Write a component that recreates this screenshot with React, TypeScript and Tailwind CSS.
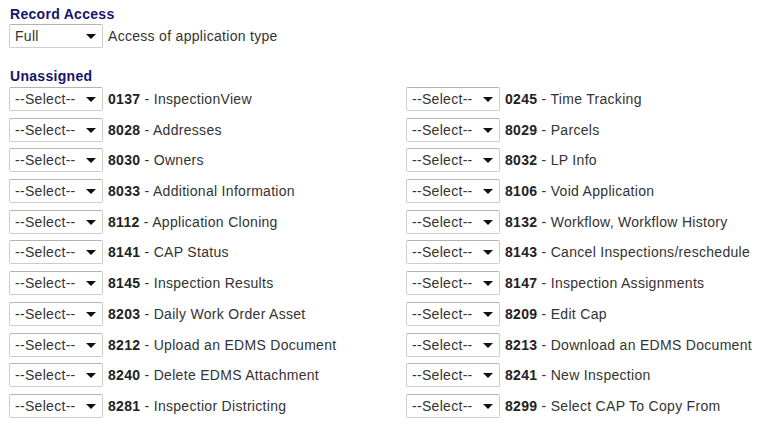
import { memo } from "react";

interface AccessItem {
  code: string;
  label: string;
}

const items: AccessItem[] = [
  { code: "0137", label: "InspectionView" },
  { code: "0245", label: "Time Tracking" },
  { code: "8028", label: "Addresses" },
  { code: "8029", label: "Parcels" },
  { code: "8030", label: "Owners" },
  { code: "8032", label: "LP Info" },
  { code: "8033", label: "Additional Information" },
  { code: "8106", label: "Void Application" },
  { code: "8112", label: "Application Cloning" },
  { code: "8132", label: "Workflow, Workflow History" },
  { code: "8141", label: "CAP Status" },
  { code: "8143", label: "Cancel Inspections/reschedule" },
  { code: "8145", label: "Inspection Results" },
  { code: "8147", label: "Inspection Assignments" },
  { code: "8203", label: "Daily Work Order Asset" },
  { code: "8209", label: "Edit Cap" },
  { code: "8212", label: "Upload an EDMS Document" },
  { code: "8213", label: "Download an EDMS Document" },
  { code: "8240", label: "Delete EDMS Attachment" },
  { code: "8241", label: "New Inspection" },
  { code: "8281", label: "Inspectior Districting" },
  { code: "8299", label: "Select CAP To Copy From" },
];

function FakeSelect({ value }: { value: string }) {
  return (
    <div className="flex items-center justify-between w-[94px] h-[24px] shrink-0 pl-[5px] pr-[6px] bg-white border border-[#cdcdcd] border-t-[#b4b4b4] rounded-[2px] text-[14px] leading-4 tracking-[0.3px] text-[#333]">
      <span>{value}</span>
      <svg width="10" height="5" viewBox="0 0 10 5" className="mt-px">
        <path d="M0 0H10L5 5Z" fill="#111" />
      </svg>
    </div>
  );
}

function AccessRow({ item }: { item: AccessItem }) {
  return (
    <div className="flex items-center h-[24px] gap-[5px]">
      <FakeSelect value="--Select--" />
      <span className="text-[14px] leading-4 tracking-[0.3px] text-[#333] whitespace-nowrap">
        <b className="text-[#222]">{item.code}</b> - {item.label}
      </span>
    </div>
  );
}

export default memo(function App() {
  return (
    <div
      className="w-[772px] h-[430px] bg-white pt-[6px] pl-[9px] overflow-hidden"
      style={{ fontFamily: '"Liberation Sans", Arial, sans-serif' }}
    >
      <h3 className="pl-px text-[14px] leading-4 tracking-[0.3px] font-bold text-[#15156b]">Record Access</h3>
      <div className="flex items-center mt-[2px] gap-[5px]">
        <FakeSelect value="Full" />
        <span className="text-[14px] leading-4 tracking-[0.3px] text-[#333]">Access of application type</span>
      </div>

      <h3 className="pl-px mt-[20px] text-[14px] leading-4 tracking-[0.3px] font-bold text-[#15156b]">Unassigned</h3>
      <div className="grid grid-cols-[397px_1fr] gap-y-[6.7px] mt-[3px]">
        {items.map((item) => (
          <AccessRow key={item.code} item={item} />
        ))}
      </div>
    </div>
  );
});
